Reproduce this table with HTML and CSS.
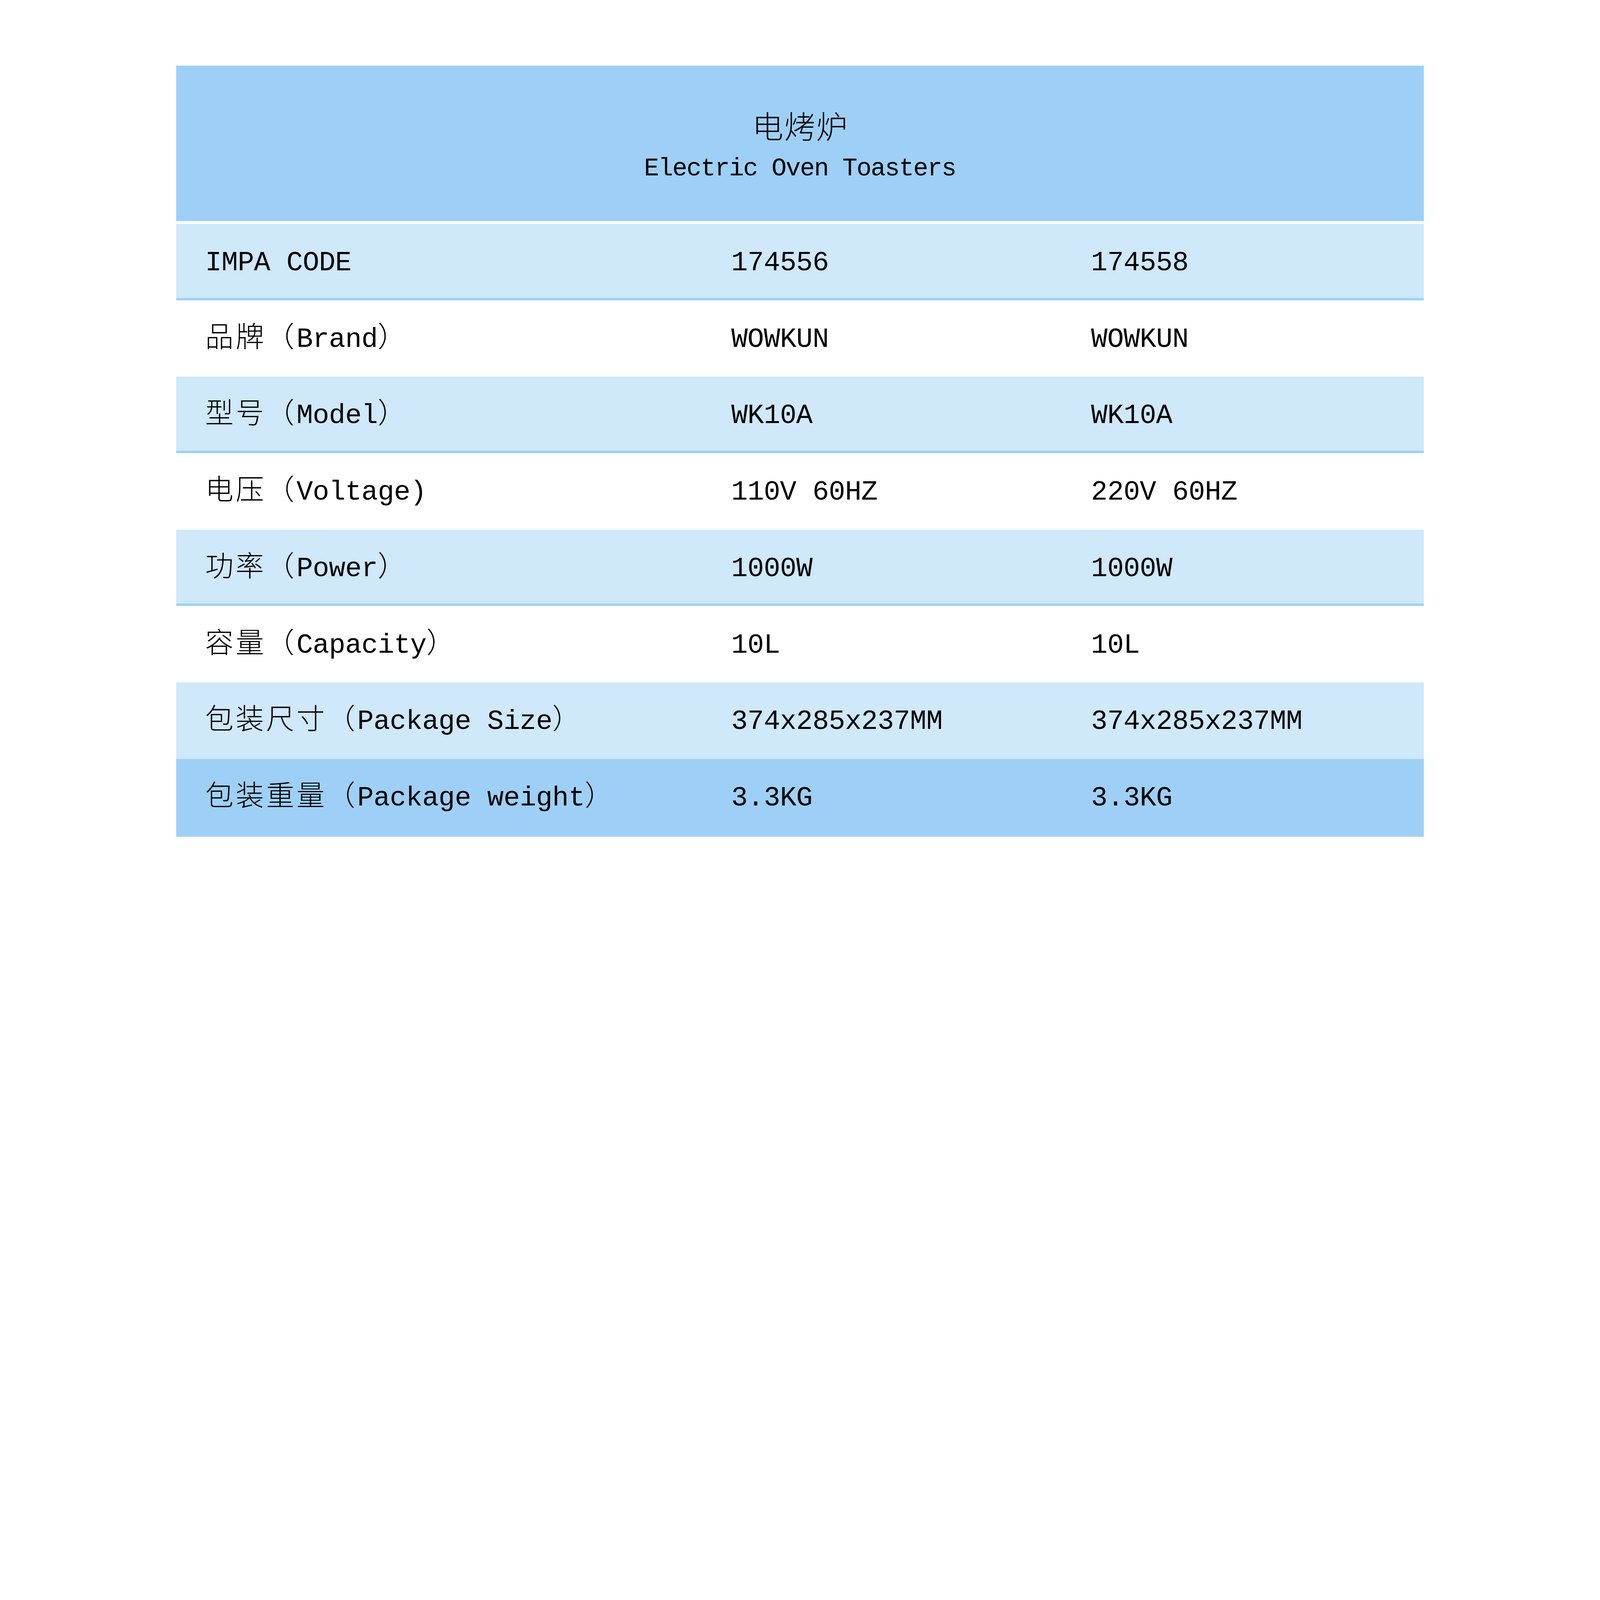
FILE: index.html
```html
<!DOCTYPE html>
<html lang="zh-CN">
<head>
<meta charset="utf-8">
<title>电烤炉 Electric Oven Toasters</title>
<link rel="stylesheet" href="styles.css">
</head>
<body>
<div class="sheet">
  <div class="head">
    <div class="title">电烤炉</div>
    <div class="subtitle">Electric Oven Toasters</div>
  </div>
  <div class="gap"></div>
  <div class="row light ruled">
    <div class="cell">IMPA CODE</div>
    <div class="cell">174556</div>
    <div class="cell">174558</div>
  </div>
  <div class="row">
    <div class="cell"><span class="zh">品牌（</span>Brand<span class="zh">）</span></div>
    <div class="cell">WOWKUN</div>
    <div class="cell">WOWKUN</div>
  </div>
  <div class="row light ruled">
    <div class="cell"><span class="zh">型号（</span>Model<span class="zh">）</span></div>
    <div class="cell">WK10A</div>
    <div class="cell">WK10A</div>
  </div>
  <div class="row">
    <div class="cell"><span class="zh">电压（</span>Voltage)</div>
    <div class="cell">110V 60HZ</div>
    <div class="cell">220V 60HZ</div>
  </div>
  <div class="row light ruled">
    <div class="cell"><span class="zh">功率（</span>Power<span class="zh">）</span></div>
    <div class="cell">1000W</div>
    <div class="cell">1000W</div>
  </div>
  <div class="row">
    <div class="cell"><span class="zh">容量（</span>Capacity<span class="zh">）</span></div>
    <div class="cell">10L</div>
    <div class="cell">10L</div>
  </div>
  <div class="row light">
    <div class="cell"><span class="zh">包装尺寸（</span>Package Size<span class="zh">）</span></div>
    <div class="cell">374x285x237MM</div>
    <div class="cell">374x285x237MM</div>
  </div>
  <div class="row dark">
    <div class="cell"><span class="zh">包装重量（</span>Package weight<span class="zh">）</span></div>
    <div class="cell">3.3KG</div>
    <div class="cell">3.3KG</div>
  </div>
</div>
</body>
</html>
```

FILE: styles.css
```css
:root {
  --u: calc(100vw / 7680);
}

html, body {
  margin: 0;
  padding: 0;
  background: #ffffff;
}

body {
  overflow: hidden;
  color: #000000;
  font-family: "Liberation Mono", "Noto Sans CJK SC", monospace;
}

.sheet {
  width: calc(5989 * var(--u));
  margin: calc(315 * var(--u)) 0 0 calc(845 * var(--u));
  display: flex;
  flex-direction: column;
}

.head {
  height: calc(747 * var(--u));
  box-sizing: border-box;
  background: #9ed0f7;
  padding-top: calc(209 * var(--u));
  display: flex;
  flex-direction: column;
  align-items: center;
  gap: calc(77 * var(--u));
}

.title {
  font-family: "Noto Sans CJK SC", sans-serif;
  font-weight: 300;
  font-size: calc(150 * var(--u));
  line-height: calc(150 * var(--u));
  letter-spacing: calc(4 * var(--u));
  margin-right: calc(-4 * var(--u));
}

.subtitle {
  font-family: "Liberation Mono", monospace;
  font-size: calc(120 * var(--u));
  line-height: calc(118 * var(--u));
  letter-spacing: calc(-4 * var(--u));
  white-space: pre;
}

.gap {
  height: calc(12 * var(--u));
  background: #ffffff;
}

.row {
  height: calc(367 * var(--u));
  box-sizing: border-box;
  display: grid;
  grid-template-columns: calc(2525 * var(--u)) calc(1727 * var(--u)) calc(1737 * var(--u));
  align-items: start;
  background: #ffffff;
}

.row.light {
  background: #cfe8fa;
}

.row.ruled {
  border-bottom: calc(13 * var(--u)) solid #9ed0f7;
}

.row.dark {
  background: #9ed0f7;
  height: calc(374 * var(--u));
}

.cell {
  padding: calc(113 * var(--u)) 0 0 calc(140 * var(--u));
  font-size: calc(132 * var(--u));
  line-height: calc(150 * var(--u));
  letter-spacing: calc(-1.2 * var(--u));
  white-space: pre;
}

.zh {
  font-family: "Noto Sans CJK SC", sans-serif;
  font-weight: 300;
  font-size: calc(136 * var(--u));
  line-height: calc(100 * var(--u));
  letter-spacing: calc(10 * var(--u));
}
```
